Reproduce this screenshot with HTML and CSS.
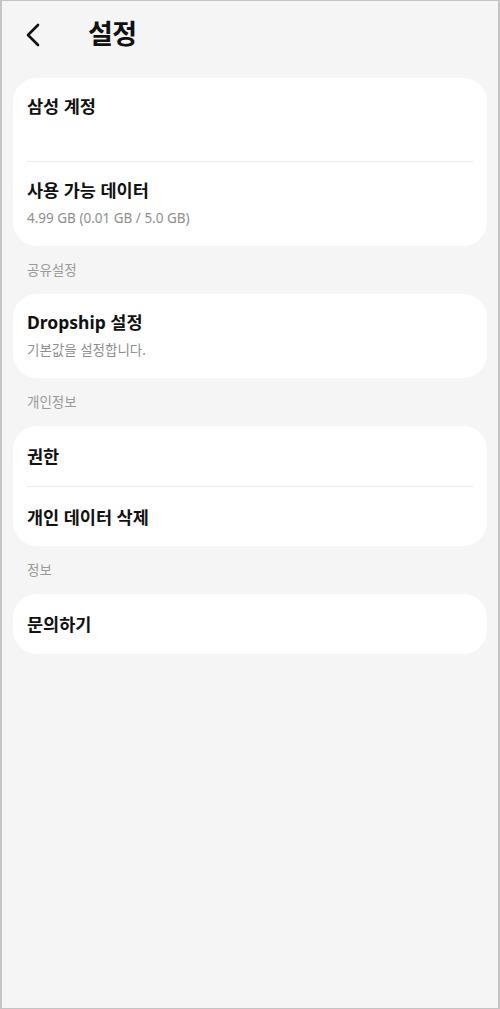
FILE: index.html
```html
<!DOCTYPE html>
<html lang="ko">

<head>
    <meta charset="UTF-8" />
    <meta name="viewport" content="width=device-width, initial-scale=1.0" />
    <title>설정</title>
    <link rel="stylesheet" href="styles.css">
</head>

<body>
    <div class="screen">
        <div class="header">
            <button class="back" aria-label="뒤로">
                <svg width="16" height="24" viewBox="0 0 16 24">
                    <path d="M13 2 L3 12 L13 22" fill="none" stroke="#111" stroke-width="2.6" stroke-linecap="round" stroke-linejoin="round" />
                </svg>
            </button>
            <h1>설정</h1>
        </div>

        <div class="card">
            <div class="item item-tall">
                <div class="item-title">삼성 계정</div>
            </div>
            <div class="divider"></div>
            <div class="item">
                <div class="item-title">사용 가능 데이터</div>
                <div class="item-sub">4.99 GB (0.01 GB / 5.0 GB)</div>
            </div>
        </div>

        <div class="section-label">공유설정</div>
        <div class="card">
            <div class="item">
                <div class="item-title">Dropship 설정</div>
                <div class="item-sub">기본값을 설정합니다.</div>
            </div>
        </div>

        <div class="section-label">개인정보</div>
        <div class="card">
            <div class="item item-single">
                <div class="item-title">권한</div>
            </div>
            <div class="divider"></div>
            <div class="item item-single">
                <div class="item-title">개인 데이터 삭제</div>
            </div>
        </div>

        <div class="section-label">정보</div>
        <div class="card">
            <div class="item item-single">
                <div class="item-title">문의하기</div>
            </div>
        </div>
    </div>
</body>

</html>
```

FILE: styles.css
```css
* {
    padding: 0;
    margin: 0;
    box-sizing: border-box;
    font-family: 'Noto Sans', 'Noto Sans CJK KR', sans-serif;
}

body {
    background-color: #f5f5f5;
    width: 500px;
    height: 1009px;
}

.screen {
    height: 1009px;
    border: 1px solid #c4c4c4;
    border-left-width: 2px;
    border-right-width: 2px;
    padding: 0 11px;
    background-color: #f5f5f5;
}

.header {
    display: flex;
    align-items: center;
    height: 68px;
    padding-left: 12px;
}

.back {
    display: flex;
    align-items: center;
    background: none;
    border: none;
    width: 63px;
    height: 30px;
    padding-left: 0;
}

h1 {
    font-size: 27px;
    font-weight: 700;
    color: #111;
    letter-spacing: -0.5px;
    padding-bottom: 5px;
}

.card {
    background: #fff;
    border-radius: 24px;
    margin-top: 14px;
}

.header + .card {
    margin-top: 9px;
}

.item {
    padding: 15px 14px 0;
    height: 84px;
}

.item-tall {
    height: 83px;
}

.item-single {
    height: 60px;
    display: flex;
    align-items: center;
    padding-top: 0;
}

.divider + .item-single {
    height: 59px;
}

.item-title {
    font-size: 17.5px;
    font-weight: 700;
    color: #111;
    line-height: 26px;
}

.item-sub {
    font-size: 13.5px;
    color: #8e8e8e;
    line-height: 20px;
    margin-top: 5px;
}

.divider {
    height: 1px;
    background: #ececec;
    margin: 0 14px;
}

.section-label {
    font-size: 13.5px;
    color: #9a9a9a;
    padding: 14px 14px 0;
    line-height: 20px;
}
```
